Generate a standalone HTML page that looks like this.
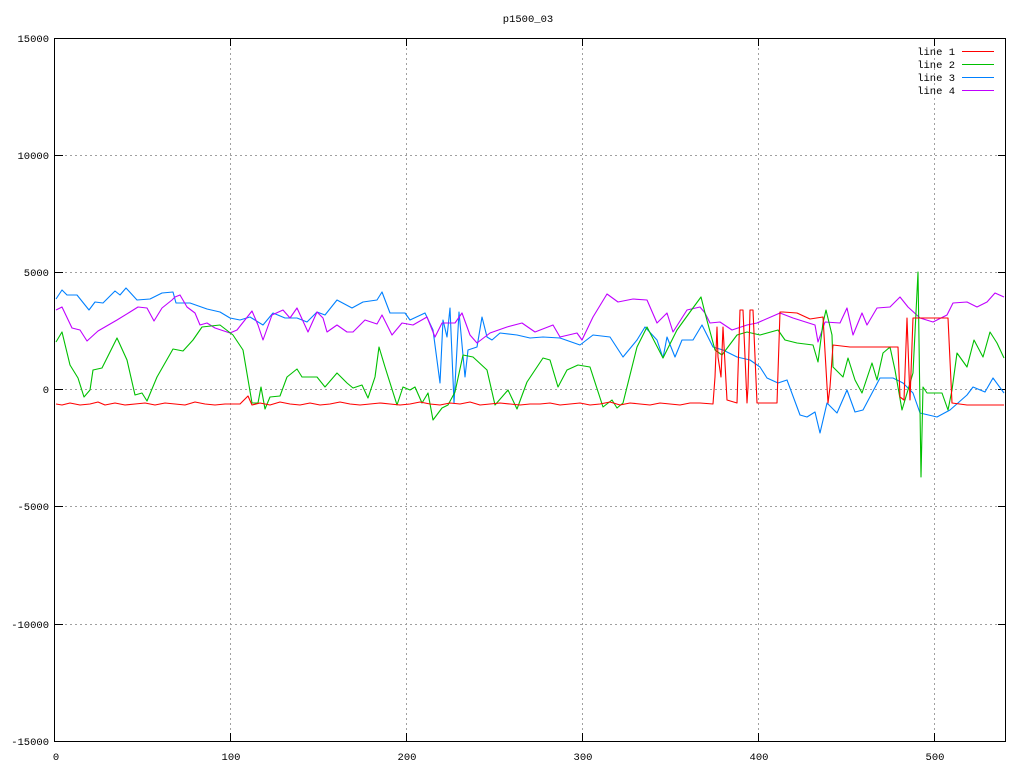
<!DOCTYPE html>
<html><head><meta charset="utf-8"><style>
html,body{margin:0;padding:0;background:#fff;width:1024px;height:768px;overflow:hidden}
svg{display:block}
text{font-family:"Liberation Mono","DejaVu Sans Mono",monospace;font-size:10.5px;fill:#000}
</style></head><body>
<svg width="1024" height="768" viewBox="0 0 1024 768" xmlns="http://www.w3.org/2000/svg">
<g stroke="#a0a0a0" stroke-width="1" stroke-dasharray="2,3" fill="none">
<path d="M55 155.5H1006M55 272.5H1006M55 389.5H1006M55 506.5H1006M55 624.5H1006"/>
<path d="M230.5 38V741M406.5 38V741M582.5 38V741M758.5 38V741M934.5 38V741"/>
</g>
<g stroke="#000" stroke-width="1" fill="none">
<rect x="54.5" y="38.5" width="951" height="703"/>
<path d="M55 155.5h8M55 272.5h8M55 389.5h8M55 506.5h8M55 624.5h8M1006 155.5h-8M1006 272.5h-8M1006 389.5h-8M1006 506.5h-8M1006 624.5h-8"/>
<path d="M230.5 741v-8M406.5 741v-8M582.5 741v-8M758.5 741v-8M934.5 741v-8M230.5 38v8M406.5 38v8M582.5 38v8M758.5 38v8M934.5 38v8"/>
</g>
<text x="528" y="22" text-anchor="middle">p1500_03</text>
<g text-anchor="end">
<text x="49" y="42">15000</text><text x="49" y="159">10000</text><text x="49" y="276">5000</text>
<text x="49" y="393">0</text><text x="49" y="510">-5000</text><text x="49" y="628">-10000</text><text x="49" y="745">-15000</text>
</g>
<g text-anchor="middle">
<text x="56" y="760">0</text><text x="231" y="760">100</text><text x="407" y="760">200</text>
<text x="583" y="760">300</text><text x="759" y="760">400</text><text x="935" y="760">500</text>
</g>
<g text-anchor="end">
<text x="955" y="55">line 1</text><text x="955" y="68">line 2</text><text x="955" y="81">line 3</text><text x="955" y="94">line 4</text>
</g>
<path d="M962 51.5h32" stroke="#ff0000"/><path d="M962 64.5h32" stroke="#00c000"/>
<path d="M962 77.5h32" stroke="#0080ff"/><path d="M962 90.5h32" stroke="#c000ff"/>
<g fill="none" stroke-width="1.1" stroke-linejoin="round">
<polyline stroke="#0080ff" points="56,299 62,290 67,295 77,295 89,310 95,302 103,303 115,291 120,295 126,288 137,300 150,299 162,293 173,292 176,303 190,303 207,309 220,312 230,318 240,320 250,317 263,325 273,313 285,318 297,318 307,322 317,312 325,315 337,300 352,308 363,302 377,300 382,292 390,313 405,313 410,320 425,313 433,330 440,383 443,320 447,337 450,308 454,403 459,312 465,377 468,350 477,347 482,317 487,337 492,340 500,333 517,335 530,338 543,337 560,338 580,345 593,335 610,337 623,357 637,340 645,327 657,340 663,358 667,337 675,357 682,340 693,340 702,325 713,347 723,350 737,357 750,360 760,367 767,378 778,383 787,380 800,415 807,417 815,412 820,433 827,403 837,413 847,390 855,412 863,410 880,378 893,378 903,383 913,393 920,413 937,417 950,410 967,395 973,387 985,392 993,378 1004,393"/>
<polyline stroke="#c000ff" points="56,310 62,307 72,328 80,330 87,341 98,331 117,320 130,312 138,307 147,308 154,321 162,308 172,300 175,297 180,295 187,307 195,313 200,325 207,323 215,328 230,333 237,330 252,311 258,325 263,340 272,315 283,310 290,318 297,308 308,332 317,312 323,318 327,332 337,325 347,332 353,332 365,320 377,324 382,315 392,335 402,323 413,325 427,317 435,337 442,323 455,323 462,313 470,335 477,343 490,333 507,327 522,323 535,332 553,325 560,337 577,333 582,340 593,317 607,294 618,302 633,299 647,300 657,323 667,313 673,332 687,310 700,307 705,313 710,323 720,322 732,330 747,325 757,323 780,313 793,318 815,325 818,342 825,322 840,323 847,308 853,335 862,313 867,325 877,308 890,307 900,297 908,307 920,318 933,322 947,315 953,303 967,302 977,307 987,302 995,293 1004,297"/>
<polyline stroke="#00c000" points="56,342 62,332 70,365 78,378 84,397 90,390 93,370 102,368 117,338 127,360 135,395 142,393 147,401 157,377 173,349 183,351 193,340 202,327 220,325 233,335 243,350 252,403 258,403 261,387 265,409 270,397 280,396 287,377 297,369 302,377 317,377 325,387 337,373 347,383 353,388 362,385 368,398 375,377 379,347 385,367 397,405 403,387 410,390 415,387 422,403 428,393 433,420 442,408 448,405 455,392 463,355 473,357 487,370 495,405 508,390 517,409 527,382 543,358 550,360 558,387 567,370 578,365 590,367 603,407 612,400 617,408 623,403 637,347 647,327 663,358 677,330 690,312 701,297 705,313 715,350 722,355 728,347 737,335 747,332 760,335 778,330 785,340 797,343 813,345 818,362 823,323 826,310 832,335 833,367 843,377 848,358 855,380 862,393 872,363 877,380 883,353 890,347 895,370 902,410 913,373 918,272 921,477 923,387 927,393 942,393 948,410 952,390 957,353 967,367 974,340 983,357 990,332 997,343 1004,358"/>
<polyline stroke="#ff0000" points="56,404 62,405 70,403 80,405 90,404 98,402 105,405 115,403 125,405 135,404 145,403 155,405 165,403 175,404 185,405 195,402 205,404 215,405 225,404 240,404 248,396 252,405 260,403 270,405 280,402 290,404 300,405 310,403 320,405 330,404 340,402 350,404 360,405 370,404 380,403 390,404 400,405 410,404 420,402 430,404 440,405 450,403 460,404 470,402 480,405 490,404 500,403 510,404 520,405 530,404 540,404 550,403 560,405 570,404 580,403 590,405 600,404 610,402 620,405 630,403 640,404 650,405 660,403 670,404 680,405 690,403 700,403 713,404 715,377 717,327 718,357 721,377 723,327 727,400 737,403 740,310 743,310 747,403 748,387 750,310 753,310 757,403 777,403 780,312 783,312 797,313 810,319 823,317 828,403 830,387 833,345 850,347 898,347 900,397 904,400 907,318 910,400 913,318 918,318 948,318 952,403 967,405 987,405 1004,405"/>
</g>
</svg>
</body></html>
